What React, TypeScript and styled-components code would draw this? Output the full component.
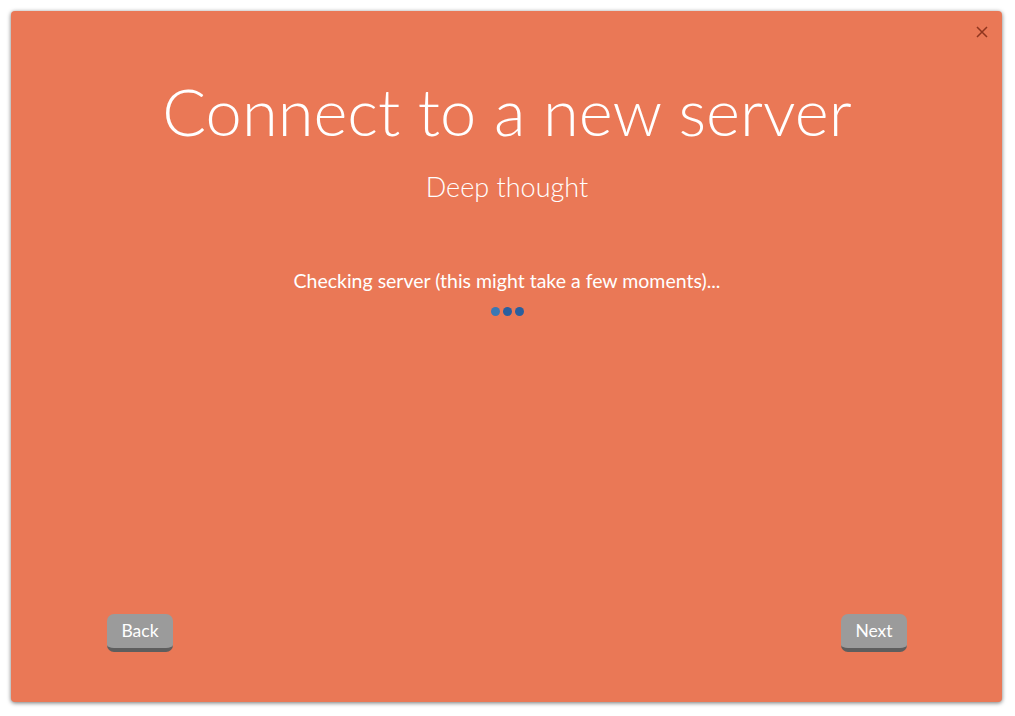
import React from 'react';
import styled, { createGlobalStyle } from 'styled-components';

const GlobalStyle = createGlobalStyle`
  html, body {
    margin: 0;
    padding: 0;
    background: #ffffff;
  }
  body {
    font-family: 'Lato', 'Noto Sans', sans-serif;
  }
`;

const Page = styled.div`
  width: 1015px;
  height: 716px;
  box-sizing: border-box;
  padding: 11px 13px 14px 11px;
`;

const Modal = styled.div`
  position: relative;
  width: 991px;
  height: 691px;
  box-sizing: border-box;
  background: #ea7856;
  border-radius: 4px;
  box-shadow: 0 1px 4px rgba(0, 0, 0, 0.55);
  display: flex;
  flex-direction: column;
  align-items: center;
  padding: 61px 95px 50px 96px;
  color: #ffffff;
`;

const CloseButton = styled.button`
  position: absolute;
  top: 12px;
  right: 12px;
  width: 17px;
  height: 17px;
  padding: 0;
  border: none;
  background: transparent;
  color: #8f351e;
  cursor: pointer;
  display: flex;
  align-items: center;
  justify-content: center;
`;

const Title = styled.h1`
  margin: 0;
  font-size: 65px;
  line-height: 78px;
  font-weight: 300;
`;

const Subtitle = styled.h2`
  margin: 20px 0 0;
  font-size: 27px;
  line-height: 34px;
  font-weight: 300;
`;

const Status = styled.p`
  margin: 65px 0 0;
  font-size: 19.5px;
  line-height: 24px;
  font-weight: 400;
`;

const Dots = styled.div`
  display: flex;
  gap: 3px;
  margin-top: 14px;
`;

const Dot = styled.span<{ $light?: boolean }>`
  width: 9px;
  height: 9px;
  border-radius: 50%;
  background: ${(p) => (p.$light ? '#3a78b4' : '#2a5f9e')};
`;

const Footer = styled.div`
  margin-top: auto;
  width: 100%;
  display: flex;
  justify-content: space-between;
  align-items: flex-end;
`;

const Button = styled.button`
  height: 38px;
  min-width: 66px;
  padding: 0 13px 2px;
  box-sizing: border-box;
  border: none;
  border-bottom: 4px solid #5e5e5e;
  border-radius: 7px;
  background: #9b9b9b;
  color: #ffffff;
  font-family: 'Lato', 'Noto Sans', sans-serif;
  font-size: 17.5px;
  cursor: pointer;
`;

const CloseIcon: React.FC = () => (
  <svg width="12" height="12" viewBox="0 0 12 12">
    <path d="M1 1 L11 11 M11 1 L1 11" stroke="currentColor" strokeWidth="1.5" />
  </svg>
);

export default function App() {
  return (
    <>
      <GlobalStyle />
      <Page>
        <Modal>
          <CloseButton title="Close">
            <CloseIcon />
          </CloseButton>
          <Title>Connect to a new server</Title>
          <Subtitle>Deep thought</Subtitle>
          <Status>Checking server (this might take a few moments)...</Status>
          <Dots>
            <Dot $light />
            <Dot />
            <Dot />
          </Dots>
          <Footer>
            <Button>Back</Button>
            <Button>Next</Button>
          </Footer>
        </Modal>
      </Page>
    </>
  );
}
